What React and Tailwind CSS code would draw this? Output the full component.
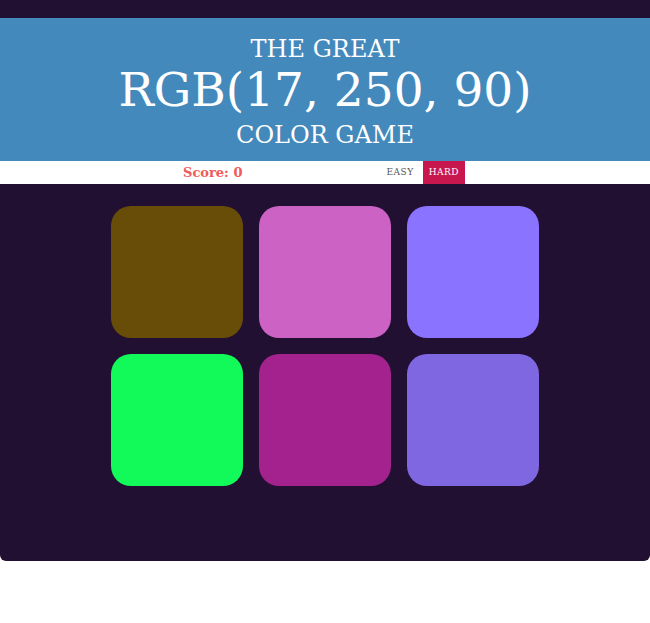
import React, { useState } from 'react';

const colors = [
  'rgb(104, 77, 8)',
  'rgb(204, 98, 196)',
  'rgb(138, 115, 255)',
  'rgb(17, 250, 90)',
  'rgb(163, 34, 141)',
  'rgb(127, 103, 226)',
];

export default function App() {
  const [mode, setMode] = useState('hard');
  const [score] = useState(0);

  return (
    <div className="bg-white h-[623px] font-['DejaVu_Serif',serif]">
      <div className="bg-[#221033] rounded-b-md h-[561px] pt-[18px]">
        {/* Header */}
        <div className="bg-[#4389bb] text-white text-center h-[143px] pt-[16px]">
          <h2 className="text-[24px] leading-[30px] font-normal">THE GREAT</h2>
          <h1 className="text-[47px] leading-[52px] font-normal mb-[4px]">RGB(17, 250, 90)</h1>
          <h2 className="text-[24px] leading-[30px] font-normal">COLOR GAME</h2>
        </div>

        {/* Controls */}
        <div className="bg-white h-[23px] flex items-stretch">
          <div className="w-[183px]" />
          <span className="flex items-center text-[13px] font-bold text-[#f05a5a]">
            Score: {score}
          </span>
          <div className="w-[138px]" />
          <button
            onClick={() => setMode('easy')}
            className={`px-[6px] text-[9px] tracking-[0.5px] ${mode === 'easy' ? 'bg-[#c8174f] text-white' : 'text-[#555]'}`}
          >
            EASY
          </button>
          <button
            onClick={() => setMode('hard')}
            className={`ml-[3px] px-[6px] text-[9px] tracking-[0.5px] ${mode === 'hard' ? 'bg-[#c8174f] text-white' : 'text-[#555]'}`}
          >
            HARD
          </button>
        </div>

        {/* Squares */}
        <div className="grid grid-cols-[repeat(3,132px)] gap-x-[16px] gap-y-[16px] justify-center pt-[22px]">
          {colors.map((c, i) => (
            <div key={i} className="w-[132px] h-[132px] rounded-[20px]" style={{ background: c }} />
          ))}
        </div>
      </div>
    </div>
  );
}
